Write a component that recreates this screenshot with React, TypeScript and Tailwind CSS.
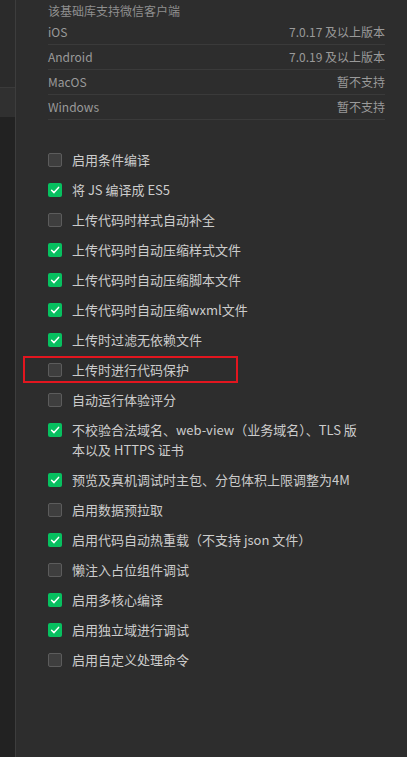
import React from "react";

const font = { fontFamily: '"Noto Sans CJK SC", "Noto Sans", sans-serif' };

type Item = { label: React.ReactNode; checked: boolean; mark?: boolean };

const items: Item[] = [
  { label: "启用条件编译", checked: false },
  { label: "将 JS 编译成 ES5", checked: true },
  { label: "上传代码时样式自动补全", checked: false },
  { label: "上传代码时自动压缩样式文件", checked: true },
  { label: "上传代码时自动压缩脚本文件", checked: true },
  { label: "上传代码时自动压缩wxml文件", checked: true },
  { label: "上传时过滤无依赖文件", checked: true },
  { label: "上传时进行代码保护", checked: false, mark: true },
  { label: "自动运行体验评分", checked: false },
  {
    label: (
      <>
        不校验合法域名、web-view（业务域名）、TLS 版
        <br />
        本以及 HTTPS 证书
      </>
    ),
    checked: true,
  },
  { label: "预览及真机调试时主包、分包体积上限调整为4M", checked: true },
  { label: "启用数据预拉取", checked: false },
  { label: "启用代码自动热重载（不支持 json 文件）", checked: true },
  { label: "懒注入占位组件调试", checked: false },
  { label: "启用多核心编译", checked: true },
  { label: "启用独立域进行调试", checked: true },
  { label: "启用自定义处理命令", checked: false },
];

const rows = [
  ["iOS", "7.0.17 及以上版本"],
  ["Android", "7.0.19 及以上版本"],
  ["MacOS", "暂不支持"],
  ["Windows", "暂不支持"],
];

function Box({ checked }: { checked: boolean }) {
  if (checked)
    return (
      <div className="w-[14px] h-[14px] shrink-0 rounded-[2px] bg-[#07c160] flex items-center justify-center mt-[3px]">
        <svg width="10" height="10" viewBox="0 0 10 10">
          <path d="M1.6 5.2 L4 7.6 L8.6 2.4" fill="none" stroke="#fff" strokeWidth="1.5" strokeLinecap="round" strokeLinejoin="round" />
        </svg>
      </div>
    );
  return <div className="w-[14px] h-[14px] shrink-0 rounded-[2px] bg-[#3e3e3e] border border-[#5c5c5c] mt-[3px]" />;
}

export default function App() {
  return (
    <div className="w-[407px] h-[757px] flex bg-[#2d2d2d] overflow-hidden" style={font}>
      <div className="w-[16px] shrink-0 flex flex-col border-r border-[#3d3d3d]">
        <div className="h-[88px] bg-[#2b2b2b] border-b border-[#3a3a3a]" />
        <div className="h-[29px] bg-[#303030]" />
        <div className="flex-1 bg-[#222222]" />
      </div>
      <div className="flex-1 pl-[32px] pr-[22px]">
        <div className="h-[20px] pt-[3px] text-[12px] leading-[16px] text-[#8f8f8f]">该基础库支持微信客户端</div>
        {rows.map(([a, b]) => (
          <div key={a} className="h-[25px] flex items-center justify-between border-b border-[#3a3a3a] text-[12px] text-[#9a9a9a]">
            <span>{a}</span>
            <span>{b}</span>
          </div>
        ))}
        <div className="mt-[25px] flex flex-col">
          {items.map((it, i) => (
            <div key={i} className="relative flex items-start py-[5px]">
              {it.mark && (
                <div className="absolute left-[-25px] top-[1px] w-[215px] h-[27px] border-2 border-[#e2161f]" />
              )}
              <Box checked={it.checked} />
              <div className="ml-[10px] text-[13px] leading-[20px] text-[#cccccc]">{it.label}</div>
            </div>
          ))}
        </div>
      </div>
    </div>
  );
}
